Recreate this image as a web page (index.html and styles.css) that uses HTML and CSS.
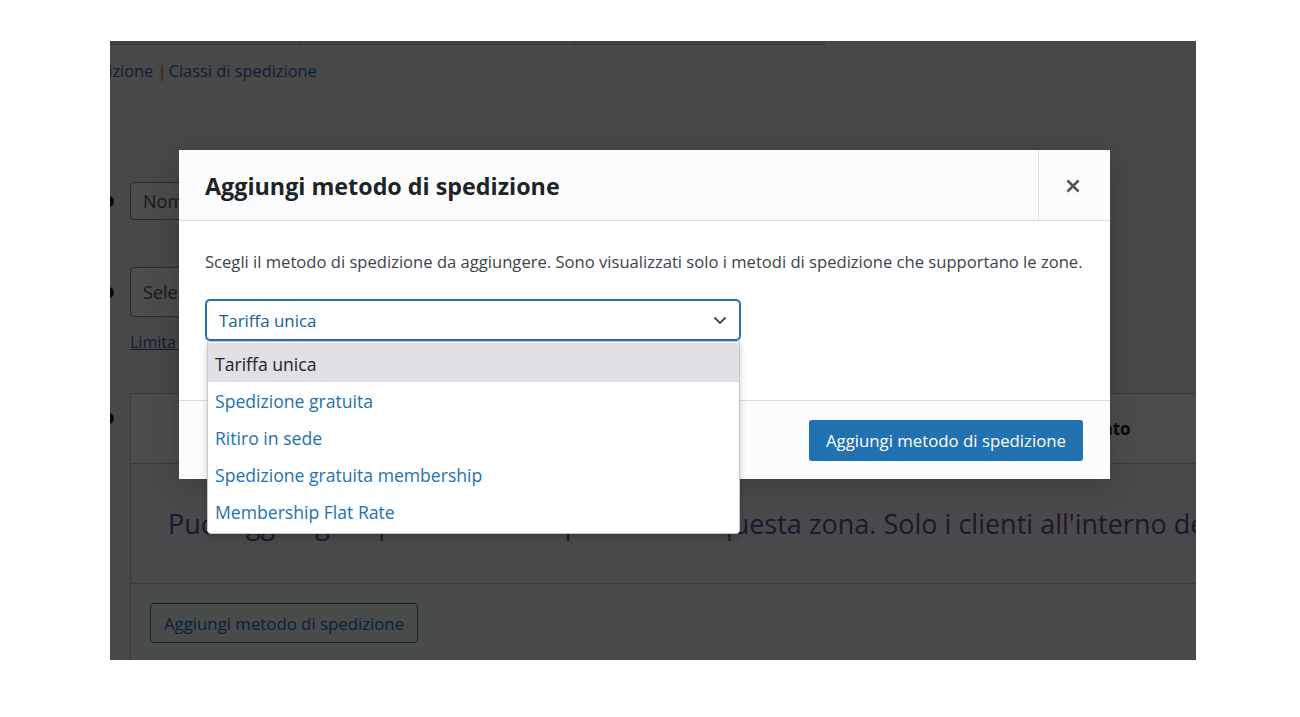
FILE: index.html
```html
<!DOCTYPE html>
<html lang="it">
<head>
  <meta charset="UTF-8" />
  <title>Aggiungi metodo di spedizione</title>
  <link rel="stylesheet" href="styles.css">
</head>
<body>

  <!-- Screenshot frame -->
  <div class="frame">

    <!-- Underlying admin page -->
    <div class="wp-page">
      <div class="tabs">
        <span class="tab t1"></span>
        <span class="tab t2"></span>
        <span class="tab t3"></span>
        <span class="tab t4"></span>
        <span class="tab t5"></span>
      </div>

      <div class="subnav">
        <a href="#">Zone di spedizione</a> <span class="sep">|</span><a href="#">Classi di spedizione</a>
      </div>

      <div class="form-row row-name">
        <span class="help-dot"></span>
        <div class="field">Nome zona</div>
      </div>

      <div class="form-row row-region">
        <span class="help-dot"></span>
        <div class="field field-tall">Seleziona le regioni all'interno di questa zona</div>
      </div>

      <a href="#" class="limit-link">Limita a codici postali specifici</a>

      <div class="table-row">
        <span class="help-dot dot-table"></span>
        <div class="methods-table">
          <div class="table-head">
            <span></span>
            <span>Titolo</span>
            <span>Abilitato</span>
          </div>
          <div class="table-blank">
            <p>Puoi aggiungere più metodi di spedizione a questa zona. Solo i clienti all'interno della zona li vedranno.</p>
            <svg class="deco" viewBox="0 0 180 120" width="180" height="120">
              <path d="M-10 130 C 40 60, 110 20, 200 6" fill="none" stroke="#ffffff" stroke-width="26" opacity="0.7"/>
              <path d="M80 130 C 115 85, 150 60, 200 48" fill="none" stroke="#ffffff" stroke-width="16" opacity="0.6"/>
            </svg>
          </div>
          <div class="table-foot">
            <button class="btn-outline">Aggiungi metodo di spedizione</button>
          </div>
        </div>
      </div>
    </div>

    <!-- Dimmed backdrop -->
    <div class="backdrop"></div>

    <!-- Modal -->
    <div class="modal">
      <div class="modal-header">
        <h2>Aggiungi metodo di spedizione</h2>
        <button class="modal-close" aria-label="Chiudi">
          <svg viewBox="0 0 16 16" width="16" height="16">
            <path d="M2.5 2.5 L13.5 13.5 M13.5 2.5 L2.5 13.5" stroke="#50575e" stroke-width="2.6" fill="none"/>
          </svg>
        </button>
      </div>

      <div class="modal-body">
        <p>Scegli il metodo di spedizione da aggiungere. Sono visualizzati solo i metodi di spedizione che supportano le zone.</p>

        <div class="select-wrap">
          <div class="select">
            <span>Tariffa unica</span>
            <svg viewBox="0 0 16 16" width="16" height="16">
              <path d="M2.5 5.5 L8 11 L13.5 5.5" stroke="#3c434a" stroke-width="1.8" fill="none"/>
            </svg>
          </div>

          <!-- Open dropdown -->
          <ul class="dropdown">
            <li class="active">Tariffa unica</li>
            <li>Spedizione gratuita</li>
            <li>Ritiro in sede</li>
            <li>Spedizione gratuita membership</li>
            <li>Membership Flat Rate</li>
          </ul>
        </div>
      </div>

      <div class="modal-footer">
        <button class="btn-primary">Aggiungi metodo di spedizione</button>
      </div>
    </div>

  </div>

</body>
</html>
```

FILE: styles.css
```css
/* Basic reset */
* {
  margin: 0;
  padding: 0;
  box-sizing: border-box;
}

body {
  font-family: "Open Sans", "Noto Sans", Arial, sans-serif;
  font-size: 16.6px;
  background-color: #fff;
  color: #3c434a;
}

/* Screenshot frame */
.frame {
  position: relative;
  width: 1086px;
  height: 619px;
  margin: 41px 0 0 110px;
  overflow: hidden;
  background-color: #f0f0f1;
}

/* Underlying admin page */
.wp-page {
  margin-left: -7px;
}

.tabs {
  display: flex;
  height: 4px;
  margin-left: 7px;
}
.tab {
  height: 4px;
  border: 1px solid #c3c4c7;
  border-top: none;
  background-color: #dcdcde;
}
.t1 { width: 60px; }
.t2 { width: 130px; }
.t3 { width: 190px; }
.t4 { width: 85px; }
.t5 { width: 250px; }

.subnav {
  margin-top: 16px;
  margin-left: -93px;
  line-height: 20px;
  font-size: 16.4px;
  color: #50575e;
}
.subnav a {
  color: #2271b1;
  text-decoration: none;
}
.subnav .sep {
  color: #a07a30;
  margin-right: 2px;
}

.form-row {
  display: flex;
  align-items: center;
  gap: 16px;
}
.row-name {
  margin-top: 101px;
}
.row-region {
  margin-top: 47px;
}

.help-dot {
  flex: none;
  width: 11px;
  height: 11px;
  border-radius: 50%;
  background-color: #1d2327;
}

.field {
  width: 400px;
  height: 38px;
  padding: 0 12px;
  border: 1px solid #8c8f94;
  border-radius: 4px;
  background-color: #fff;
  font-size: 18px;
  line-height: 36px;
  color: #50575e;
  white-space: nowrap;
  overflow: hidden;
}
.field-tall {
  height: 50px;
  line-height: 48px;
}

.limit-link {
  display: block;
  margin: 15px 0 0 27px;
  line-height: 20px;
  font-size: 16px;
  color: #2271b1;
}

.table-row {
  display: flex;
  align-items: flex-start;
  gap: 16px;
  margin-top: 41px;
}
.dot-table {
  margin-top: 20px;
}

.methods-table {
  flex: 1;
  margin-right: -40px;
  border: 1px solid #c3c4c7;
  background-color: #fff;
}

.table-head {
  display: grid;
  grid-template-columns: 200px 706px 1fr;
  align-items: center;
  height: 70px;
  padding-left: 20px;
  border-bottom: 1px solid #c3c4c7;
  font-size: 17px;
  font-weight: 700;
  color: #1d2327;
}

.table-blank {
  position: relative;
  display: flex;
  align-items: center;
  height: 120px;
  padding-left: 37px;
  border-bottom: 1px solid #c3c4c7;
  background-color: #f6f2f9;
  overflow: hidden;
}
.table-blank p {
  font-size: 27px;
  color: #6f4a8f;
  white-space: nowrap;
}
.deco {
  position: absolute;
  right: 30px;
  top: 0;
}

.table-foot {
  height: 80px;
  padding: 19px 19px;
  background-color: #f6f7f7;
}

.btn-outline {
  height: 40px;
  padding: 0 13px;
  border: 1px solid #2271b1;
  border-radius: 4px;
  background-color: #f6f7f7;
  color: #2271b1;
  font-family: inherit;
  font-size: 16.8px;
}

/* Dimmed backdrop */
.backdrop {
  position: absolute;
  left: 0;
  top: 0;
  width: 100%;
  height: 100%;
  background-color: rgba(0, 0, 0, 0.7);
}

/* Modal */
.modal {
  position: absolute;
  left: 69px;
  top: 109px;
  width: 931px;
  background-color: #fff;
  box-shadow: 0 3px 30px rgba(0, 0, 0, 0.2);
}

.modal-header {
  display: flex;
  height: 71px;
  border-bottom: 1px solid #dcdcde;
  background-color: #fcfcfc;
}
.modal-header h2 {
  flex: 1;
  padding-left: 26px;
  font-size: 23.3px;
  font-weight: 700;
  line-height: 72px;
  color: #1d2327;
}
.modal-close {
  width: 72px;
  border: none;
  border-left: 1px solid #dcdcde;
  background: transparent;
  display: flex;
  align-items: center;
  justify-content: center;
  padding-top: 1px;
  padding-right: 3px;
  cursor: pointer;
}

.modal-body {
  height: 179px;
  padding: 29px 26px 0;
}
.modal-body p {
  line-height: 24px;
  margin-bottom: 26px;
  color: #3c434a;
}

.select-wrap {
  position: relative;
  width: 534px;
  margin-left: 1px;
}
.select {
  display: flex;
  align-items: center;
  justify-content: space-between;
  height: 40px;
  padding: 0 11px 0 12px;
  border: 1px solid #2271b1;
  border-radius: 4px;
  box-shadow: 0 0 0 1px #2271b1;
  background-color: #fff;
  font-size: 16.9px;
  color: #135e96;
}

/* Open option list */
.dropdown {
  position: absolute;
  left: 1px;
  top: 41px;
  width: 533px;
  padding-top: 1px;
  padding-bottom: 4px;
  list-style: none;
  background-color: #fff;
  border: 1px solid #c8c8c8;
  border-radius: 0 0 4px 4px;
  box-shadow: 0 3px 6px rgba(0, 0, 0, 0.2);
  z-index: 10;
}
.dropdown li {
  height: 37px;
  padding-left: 7px;
  line-height: 40px;
  font-size: 17.6px;
  color: #2271b1;
}
.dropdown li.active {
  height: 39px;
  line-height: 43px;
  margin-bottom: -1px;
  background-color: #e0e0e6;
  color: #1d2327;
}

.modal-footer {
  display: flex;
  justify-content: flex-end;
  height: 79px;
  padding: 19px 27px 0;
  border-top: 1px solid #dcdcde;
  background-color: #fcfcfc;
}
.btn-primary {
  height: 41px;
  padding: 0 17px;
  border: none;
  border-radius: 3px;
  background-color: #2271b1;
  color: #fff;
  font-family: inherit;
  font-size: 16.8px;
  cursor: pointer;
}
```
